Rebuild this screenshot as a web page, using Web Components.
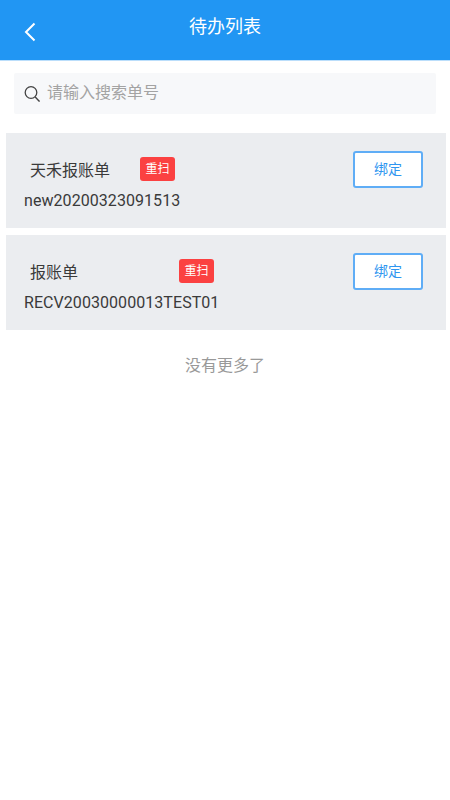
<!DOCTYPE html>
<html lang="zh">
<head>
<meta charset="utf-8">
<title>待办列表</title>
<style>
html, body { margin: 0; background: #fff; }
body { font-family: Roboto, "Noto Sans CJK SC", sans-serif; width: 450px; }
</style>
</head>
<body>
<app-header>待办列表</app-header>
<search-bar placeholder="请输入搜索单号"></search-bar>
<todo-list>
	<todo-item title="天禾报账单" code="new20200323091513" gap="30"></todo-item>
	<todo-item title="报账单" code="RECV20030000013TEST01" gap="101"></todo-item>
</todo-list>
<list-end>没有更多了</list-end>

<script>
class AppHeader extends HTMLElement {
	connectedCallback() {
		this.attachShadow({ mode: 'open' }).innerHTML = `
<style>
:host { display: block; height: 60px; background: #2196f3; color: #fff; box-shadow: 0 1px 0 #bbdefb; }
.bar { display: grid; grid-template-columns: 60px 1fr 60px; height: 60px; }
.back { display: flex; justify-content: center; padding-top: 22px; box-sizing: border-box; }
.back svg { display: block; }
.title { font-size: 18px; line-height: 24px; padding-top: 15px; text-align: center; }
</style>
<div class="bar">
	<div class="back">
		<svg width="12" height="20" viewBox="0 0 12 20"><path d="M10.5 1.5 L2 10 L10.5 18.5" fill="none" stroke="#fff" stroke-width="2" /></svg>
	</div>
	<div class="title"><slot></slot></div>
	<div></div>
</div>`
	}
}

class SearchBar extends HTMLElement {
	connectedCallback() {
		this.attachShadow({ mode: 'open' }).innerHTML = `
<style>
:host { display: block; padding: 13px 14px 19px; }
.box { display: flex; align-items: center; height: 41px; background: #f7f8fa; border-radius: 2px; padding-left: 10px; box-sizing: border-box; }
svg { display: block; flex: none; margin-right: 7px; }
.hint { font-size: 16px; color: #a3a3a3; line-height: 41px; margin-top: -2px; }
</style>
<div class="box">
	<svg width="16" height="18" viewBox="0 0 16 18"><circle cx="7" cy="7.5" r="5.8" fill="none" stroke="#444" stroke-width="1.3" /><path d="M11.2 12 L15.5 16.6" fill="none" stroke="#444" stroke-width="1.4" /></svg>
	<span class="hint">${this.getAttribute('placeholder')}</span>
</div>`
	}
}

class TodoList extends HTMLElement {
	connectedCallback() {
		this.attachShadow({ mode: 'open' }).innerHTML = `
<style>
:host { display: flex; flex-direction: column; gap: 7px; padding: 0 4px 0 6px; }
</style>
<slot></slot>`
	}
}

class TodoItem extends HTMLElement {
	connectedCallback() {
		this.attachShadow({ mode: 'open' }).innerHTML = `
<style>
:host { display: flex; justify-content: space-between; height: 95px; background: #ebedf0; box-sizing: border-box; padding: 18px 23px 0 18px; }
.name { display: flex; align-items: center; height: 36px; margin-top: 2px; padding-left: 6px; }
.title { font-size: 16px; color: #3a3a3a; line-height: 36px; }
.tag { font-size: 12px; line-height: 24px; width: 35px; height: 24px; text-align: center; color: #fff; background: #fb4141; border-radius: 3px; margin-left: ${this.getAttribute('gap')}px; margin-top: -5px; }
.code { font-size: 16px; letter-spacing: .06px; color: #3a3a3a; line-height: 22px; margin-top: 1px; }
.bind { width: 70px; height: 37px; box-sizing: border-box; border: 2px solid #5fadf6; border-radius: 3px; background: #fff; color: #2f96f0; font-size: 14px; line-height: 33px; text-align: center; }
</style>
<div>
	<div class="name"><span class="title">${this.getAttribute('title')}</span><span class="tag">重扫</span></div>
	<div class="code">${this.getAttribute('code')}</div>
</div>
<div class="bind">绑定</div>`
	}
}

class ListEnd extends HTMLElement {
	connectedCallback() {
		this.attachShadow({ mode: 'open' }).innerHTML = `
<style>
:host { display: block; padding-top: 24px; text-align: center; font-size: 16px; line-height: 24px; color: #999; }
</style>
<slot></slot>`
	}
}

customElements.define('app-header', AppHeader)
customElements.define('search-bar', SearchBar)
customElements.define('todo-list', TodoList)
customElements.define('todo-item', TodoItem)
customElements.define('list-end', ListEnd)
</script>
</body>
</html>
